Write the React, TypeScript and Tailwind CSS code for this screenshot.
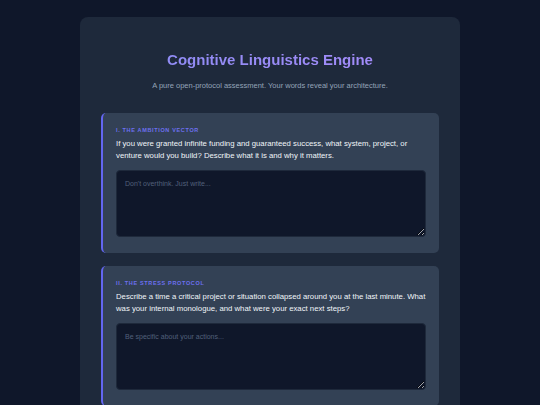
const questions = [
  {
    label: "I. The Ambition Vector",
    text: "If you were granted infinite funding and guaranteed success, what system, project, or venture would you build? Describe what it is and why it matters.",
    placeholder: "Don't overthink. Just write...",
  },
  {
    label: "II. The Stress Protocol",
    text: "Describe a time a critical project or situation collapsed around you at the last minute. What was your internal monologue, and what were your exact next steps?",
    placeholder: "Be specific about your actions...",
  },
];

export default function App() {
  return (
    <div
      className="min-h-screen w-full bg-[#0f172a] pt-[17px]"
      style={{ fontFamily: '"Liberation Sans", Arial, sans-serif' }}
    >
      <div className="mx-auto w-[380px] rounded-t-[8px] bg-[#1e293b] px-[21px] pb-[20px] pt-[34px]">
        <h1 className="bg-gradient-to-r from-[#8b8cf4] to-[#a78bfa] bg-clip-text text-center text-[15px] font-bold leading-[18px] text-transparent">
          Cognitive Linguistics Engine
        </h1>
        <p className="mt-[12px] text-center text-[7.5px] leading-[10px] text-[#94a3b8]">
          A pure open-protocol assessment. Your words reveal your architecture.
        </p>
        <div className="mt-[22px] flex flex-col gap-[13px]">
          {questions.map((q) => (
            <div
              key={q.label}
              className="rounded-[5px] border-l-2 border-[#6366f1] bg-[#334155] pb-[16px] pl-[13px] pr-[13px] pt-[14px]"
            >
              <div className="text-[5.5px] font-bold uppercase leading-[7px] tracking-[0.12em] text-[#6d70f0]">
                {q.label}
              </div>
              <p className="mt-[4px] text-[7.75px] leading-[12px] text-[#f1f5f9]">{q.text}</p>
              <textarea
                placeholder={q.placeholder}
                className="mt-[8px] block h-[67px] w-full resize-y rounded-[4px] border border-[#1e293b] bg-[#0f172a] px-[8px] py-[8px] text-[7px] leading-[10px] text-[#e2e8f0] outline-none placeholder:text-[#52607a]"
              />
            </div>
          ))}
        </div>
      </div>
    </div>
  );
}
